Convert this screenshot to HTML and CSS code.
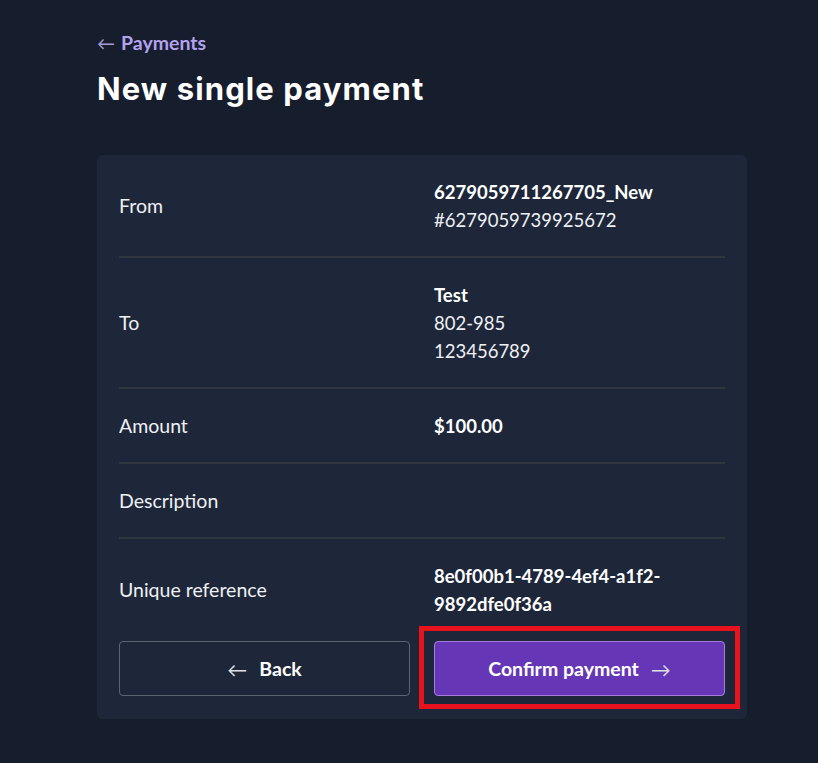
FILE: index.html
```html
<!DOCTYPE html>
<html lang="en">
<head>
<meta charset="utf-8">
<title>New single payment</title>
<link rel="stylesheet" href="styles.css">
</head>
<body>
<main class="page">
  <a class="crumb" href="#"><span class="crumb-arrow">&larr;</span>Payments</a>
  <h1 class="title">New single payment</h1>
  <section class="card">
    <div class="row">
      <div class="label">From</div>
      <div class="value"><strong>6279059711267705_New</strong><br>#6279059739925672</div>
    </div>
    <div class="row">
      <div class="label">To</div>
      <div class="value"><strong>Test</strong><br>802-985<br>123456789</div>
    </div>
    <div class="row">
      <div class="label">Amount</div>
      <div class="value"><strong>$100.00</strong></div>
    </div>
    <div class="row">
      <div class="label">Description</div>
      <div class="value"></div>
    </div>
    <div class="row last">
      <div class="label">Unique reference</div>
      <div class="value"><strong>8e0f00b1-4789-4ef4-a1f2-<br>9892dfe0f36a</strong></div>
    </div>
    <div class="actions">
      <button class="btn btn-back"><span class="arr">&larr;</span>Back</button>
      <div class="highlight">
        <button class="btn btn-confirm">Confirm payment<span class="arr arr-r">&rarr;</span></button>
      </div>
    </div>
  </section>
</main>
</body>
</html>
```
FILE: styles.css
```css
html, body {
  margin: 0;
  padding: 0;
  background: #161d2d;
}
body {
  font-family: Lato, "Liberation Sans", sans-serif;
  color: #f3f4f6;
}
.page {
  width: 650px;
  padding: 30px 0 40px 97px;
}
.crumb {
  display: inline-flex;
  align-items: center;
  color: #b4a2ee;
  text-decoration: none;
  font-size: 19.5px;
  font-weight: 700;
  line-height: 26px;
}
.crumb-arrow {
  color: #a99ad6;
  font-weight: 400;
  margin-right: 6px;
  font-size: 18px;
}
.title {
  margin: 13px 0 0;
  font-family: Inter, "Liberation Sans", sans-serif;
  font-size: 31px;
  font-weight: 700;
  line-height: 40px;
  color: #ffffff;
  letter-spacing: 1.1px;
}
.card {
  margin-top: 46px;
  background: #1e2739;
  border-radius: 6px;
  padding: 0 22px 23px;
}
.row {
  display: grid;
  grid-template-columns: 1fr 1fr;
  column-gap: 24px;
  align-items: center;
  padding: 23px 0 22px;
  border-bottom: 2px solid #30363f;
  line-height: 28px;
}
.row.last {
  border-bottom: none;
}
.label {
  color: #eef0f4;
  font-size: 19.5px;
}
.value {
  color: #eef0f4;
  font-size: 18.5px;
}
.value strong {
  font-weight: 700;
  color: #ffffff;
}
.actions {
  display: grid;
  grid-template-columns: 1fr 1fr;
  column-gap: 24px;
  margin-top: 1px;
}
.highlight {
  position: relative;
  display: flex;
}
.highlight::after {
  content: "";
  position: absolute;
  top: -15px;
  bottom: -13px;
  left: -15px;
  right: -15px;
  border: 5px solid #e8131d;
  pointer-events: none;
}
.btn {
  height: 55px;
  width: 100%;
  border-radius: 4px;
  font-family: Lato, "Liberation Sans", sans-serif;
  font-size: 19.5px;
  font-weight: 700;
  color: #ffffff;
  display: flex;
  align-items: center;
  justify-content: center;
  cursor: pointer;
}
.btn-back {
  background: transparent;
  border: 1px solid #5d6471;
}
.btn-confirm {
  background: #6537b6;
  border: 1px solid #a57ddd;
}
.arr {
  font-weight: 400;
  font-size: 20px;
  color: #dcdfe6;
  margin-right: 12px;
}
.arr-r {
  margin-right: 0;
  margin-left: 12px;
}
```
